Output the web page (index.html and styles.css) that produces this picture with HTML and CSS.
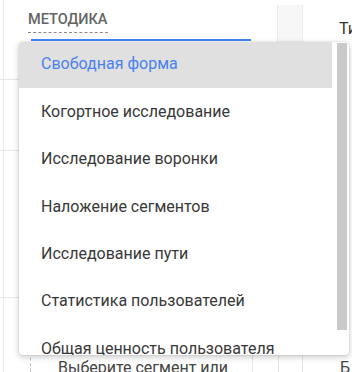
FILE: index.html
```html
<!DOCTYPE html>
<html>
  <head>
    <link rel="stylesheet" href="styles.css">
  </head>
  <body>
    <main class="page">
      <div class="rule-left"></div>
      <div class="hline hline-a"></div>
      <div class="hline hline-b"></div>
      <div class="hline hline-c"></div>

      <header class="field">
        <span class="field-label">Методика</span>
        <div class="field-line"></div>
      </header>
      <div class="col-stub"></div>
      <span class="side-title">Тип</span>

      <footer class="below">
        <div class="dash-col"></div>
        <span class="below-text">Выберите сегмент или</span>
        <div class="vline vline-a"></div>
        <div class="vline vline-b"></div>
        <div class="vline vline-c"></div>
        <span class="below-side">Б</span>
      </footer>

      <div class="menu">
        <ul class="menu-list">
          <li class="menu-item selected">Свободная форма</li>
          <li class="menu-item">Когортное исследование</li>
          <li class="menu-item">Исследование воронки</li>
          <li class="menu-item">Наложение сегментов</li>
          <li class="menu-item">Исследование пути</li>
          <li class="menu-item">Статистика пользователей</li>
          <li class="menu-item">Общая ценность пользователя</li>
        </ul>
        <div class="menu-scroll"></div>
      </div>
    </main>
  </body>
</html>
```

FILE: styles.css
```css
* {
  margin: 0;
  padding: 0;
  box-sizing: border-box;
}

html, body {
  width: 352px;
  height: 372px;
  overflow: hidden;
  background: #fff;
}

body {
  font-family: Roboto, "Noto Sans", sans-serif;
  color: #333;
}

.page {
  position: relative;
  width: 352px;
  height: 372px;
}

.rule-left {
  position: absolute;
  left: 3px;
  top: 0;
  bottom: 0;
  width: 1px;
  background: #ececec;
}

.hline {
  position: absolute;
  left: 0;
  width: 20px;
  height: 1px;
  background: #e6e6e6;
}

.hline-a { top: 79px; }
.hline-b { top: 150px; }
.hline-c { top: 297px; }

.field {
  position: absolute;
  left: 28px;
  top: 12px;
  width: 223px;
}

.field-label {
  display: block;
  width: 80px;
  font-size: 14.5px;
  font-weight: 500;
  text-transform: uppercase;
  color: #646464;
  line-height: 16px;
  padding-bottom: 4px;
  border-bottom: 1px dashed #8a8a8a;
}

.field-line {
  margin: 6px 0 0 3px;
  height: 2px;
  background: #4285f4;
}

.col-stub {
  position: absolute;
  left: 277px;
  top: 5px;
  width: 26px;
  height: 37px;
  background: #f7f7f7;
  border-left: 1px solid #ececec;
  border-right: 1px solid #ececec;
}

.side-title {
  position: absolute;
  left: 339px;
  top: 19px;
  font-size: 16px;
  color: #333;
}

.below {
  position: absolute;
  left: 0;
  top: 352px;
  width: 352px;
  height: 20px;
}

.dash-col {
  position: absolute;
  left: 30px;
  top: 0;
  bottom: 0;
  border-left: 1px dashed #bbb;
}

.below-text {
  position: absolute;
  left: 58px;
  top: 6px;
  font-size: 16px;
  color: #444;
}

.vline {
  position: absolute;
  top: 0;
  bottom: 0;
  width: 1px;
  background: #e6e6e6;
}

.vline-a { left: 252px; }
.vline-b { left: 278px; }
.vline-c { left: 302px; }

.below-side {
  position: absolute;
  left: 340px;
  top: 6px;
  font-size: 16px;
  color: #444;
}

/* dropdown over the form */
.menu {
  position: absolute;
  left: 19px;
  top: 42px;
  width: 330px;
  height: 313px;
  background: #fff;
  border-radius: 4px;
  overflow: hidden;
  box-shadow: 0 2px 6px rgba(0, 0, 0, 0.22), 0 0 2px rgba(0, 0, 0, 0.12);
}

.menu-list {
  list-style: none;
  width: 313px;
}

.menu-item {
  height: 47.33px;
  padding: 14px 0 0 22px;
  font-size: 16px;
  line-height: 20px;
  color: #383838;
  white-space: nowrap;
}

.menu-item.selected {
  background: #e0e0e0;
  color: #4a80f0;
  height: 46px;
  padding-top: 12px;
}

.menu-scroll {
  position: absolute;
  right: 2px;
  top: 1px;
  width: 10px;
  height: 287px;
  background: #c9c9c9;
}
```
